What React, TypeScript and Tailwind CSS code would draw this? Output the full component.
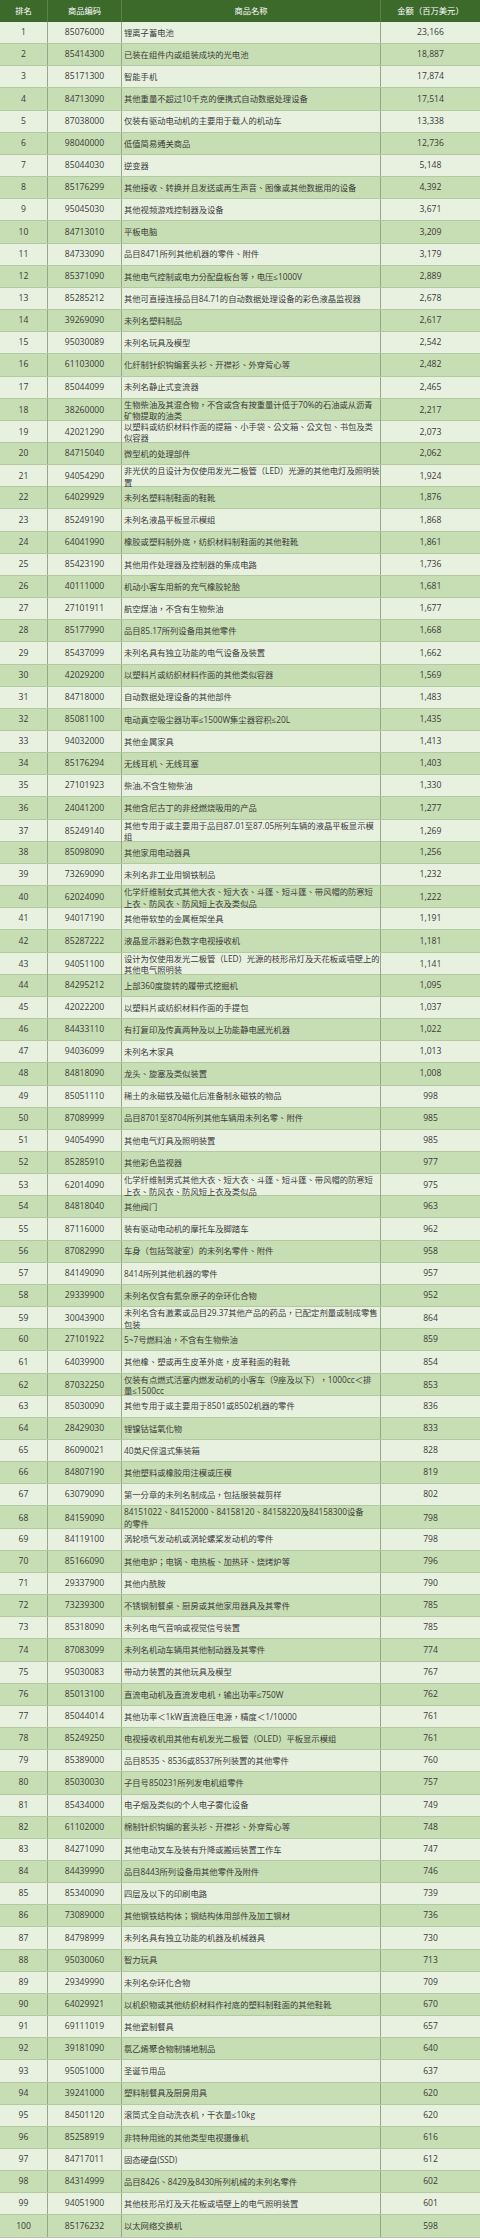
const rows: [string, string, string][] = [
  ["85076000", "锂离子蓄电池", "23,166"],
  ["85414300", "已装在组件内或组装成块的光电池", "18,887"],
  ["85171300", "智能手机", "17,874"],
  ["84713090", "其他重量不超过10千克的便携式自动数据处理设备", "17,514"],
  ["87038000", "仅装有驱动电动机的主要用于载人的机动车", "13,338"],
  ["98040000", "低值简易通关商品", "12,736"],
  ["85044030", "逆变器", "5,148"],
  ["85176299", "其他接收、转换并且发送或再生声音、图像或其他数据用的设备", "4,392"],
  ["95045030", "其他视频游戏控制器及设备", "3,671"],
  ["84713010", "平板电脑", "3,209"],
  ["84733090", "品目8471所列其他机器的零件、附件", "3,179"],
  ["85371090", "其他电气控制或电力分配盘板台等，电压≤1000V", "2,889"],
  ["85285212", "其他可直接连接品目84.71的自动数据处理设备的彩色液晶监视器", "2,678"],
  ["39269090", "未列名塑料制品", "2,617"],
  ["95030089", "未列名玩具及模型", "2,542"],
  ["61103000", "化纤制针织钩编套头衫、开襟衫、外穿背心等", "2,482"],
  ["85044099", "未列名静止式变流器", "2,465"],
  ["38260000", "生物柴油及其混合物，不含或含有按重量计低于70%的石油或从沥青\n矿物提取的油类", "2,217"],
  ["42021290", "以塑料或纺织材料作面的提箱、小手袋、公文箱、公文包、书包及类\n似容器", "2,073"],
  ["84715040", "微型机的处理部件", "2,062"],
  ["94054290", "非光伏的且设计为仅使用发光二极管（LED）光源的其他电灯及照明装\n置", "1,924"],
  ["64029929", "未列名塑料制鞋面的鞋靴", "1,876"],
  ["85249190", "未列名液晶平板显示模组", "1,868"],
  ["64041990", "橡胶或塑料制外底，纺织材料制鞋面的其他鞋靴", "1,861"],
  ["85423190", "其他用作处理器及控制器的集成电路", "1,736"],
  ["40111000", "机动小客车用新的充气橡胶轮胎", "1,681"],
  ["27101911", "航空煤油，不含有生物柴油", "1,677"],
  ["85177990", "品目85.17所列设备用其他零件", "1,668"],
  ["85437099", "未列名具有独立功能的电气设备及装置", "1,662"],
  ["42029200", "以塑料片或纺织材料作面的其他类似容器", "1,569"],
  ["84718000", "自动数据处理设备的其他部件", "1,483"],
  ["85081100", "电动真空吸尘器功率≤1500W集尘器容积≤20L", "1,435"],
  ["94032000", "其他金属家具", "1,413"],
  ["85176294", "无线耳机、无线耳塞", "1,403"],
  ["27101923", "柴油,不含生物柴油", "1,330"],
  ["24041200", "其他含尼古丁的非经燃烧吸用的产品", "1,277"],
  ["85249140", "其他专用于或主要用于品目87.01至87.05所列车辆的液晶平板显示模\n组", "1,269"],
  ["85098090", "其他家用电动器具", "1,256"],
  ["73269090", "未列名非工业用钢铁制品", "1,232"],
  ["62024090", "化学纤维制女式其他大衣、短大衣、斗篷、短斗篷、带风帽的防寒短\n上衣、防风衣、防风短上衣及类似品", "1,222"],
  ["94017190", "其他带软垫的金属框架坐具", "1,191"],
  ["85287222", "液晶显示器彩色数字电视接收机", "1,181"],
  ["94051100", "设计为仅使用发光二极管（LED）光源的枝形吊灯及天花板或墙壁上的\n其他电气照明装", "1,141"],
  ["84295212", "上部360度旋转的履带式挖掘机", "1,095"],
  ["42022200", "以塑料片或纺织材料作面的手提包", "1,037"],
  ["84433110", "有打复印及传真两种及以上功能静电感光机器", "1,022"],
  ["94036099", "未列名木家具", "1,013"],
  ["84818090", "龙头、旋塞及类似装置", "1,008"],
  ["85051110", "稀土的永磁铁及磁化后准备制永磁铁的物品", "998"],
  ["87089999", "品目8701至8704所列其他车辆用未列名零、附件", "985"],
  ["94054990", "其他电气灯具及照明装置", "985"],
  ["85285910", "其他彩色监视器", "977"],
  ["62014090", "化学纤维制男式其他大衣、短大衣、斗篷、短斗篷、带风帽的防寒短\n上衣、防风衣、防风短上衣及类似品", "975"],
  ["84818040", "其他阀门", "963"],
  ["87116000", "装有驱动电动机的摩托车及脚踏车", "962"],
  ["87082990", "车身（包括驾驶室）的未列名零件、附件", "958"],
  ["84149090", "8414所列其他机器的零件", "957"],
  ["29339900", "未列名仅含有氮杂原子的杂环化合物", "952"],
  ["30043900", "未列名含有激素或品目29.37其他产品的药品，已配定剂量或制成零售\n包装", "864"],
  ["27101922", "5~7号燃料油，不含有生物柴油", "859"],
  ["64039900", "其他橡、塑或再生皮革外底，皮革鞋面的鞋靴", "854"],
  ["87032250", "仅装有点燃式活塞内燃发动机的小客车（9座及以下），1000cc＜排\n量≤1500cc", "853"],
  ["85030090", "其他专用于或主要用于8501或8502机器的零件", "836"],
  ["28429030", "锂镍钴锰氧化物", "833"],
  ["86090021", "40英尺保温式集装箱", "828"],
  ["84807190", "其他塑料或橡胶用注模或压模", "819"],
  ["63079090", "第一分章的未列名制成品，包括服装裁剪样", "802"],
  ["84159090", "84151022、84152000、84158120、84158220及84158300设备\n的零件", "798"],
  ["84119100", "涡轮喷气发动机或涡轮螺桨发动机的零件", "798"],
  ["85166090", "其他电炉；电锅、电热板、加热环、烧烤炉等", "796"],
  ["29337900", "其他内酰胺", "790"],
  ["73239300", "不锈钢制餐桌、厨房或其他家用器具及其零件", "785"],
  ["85318090", "未列名电气音响或视觉信号装置", "785"],
  ["87083099", "未列名机动车辆用其他制动器及其零件", "774"],
  ["95030083", "带动力装置的其他玩具及模型", "767"],
  ["85013100", "直流电动机及直流发电机，输出功率≤750W", "762"],
  ["85044014", "其他功率＜1kW直流稳压电源，精度＜1/10000", "761"],
  ["85249250", "电视接收机用其他有机发光二极管（OLED）平板显示模组", "761"],
  ["85389000", "品目8535、8536或8537所列装置的其他零件", "760"],
  ["85030030", "子目号850231所列发电机组零件", "757"],
  ["85434000", "电子烟及类似的个人电子雾化设备", "749"],
  ["61102000", "棉制针织钩编的套头衫、开襟衫、外穿背心等", "748"],
  ["84271090", "其他电动叉车及装有升降或搬运装置工作车", "747"],
  ["84439990", "品目8443所列设备用其他零件及附件", "746"],
  ["85340090", "四层及以下的印刷电路", "739"],
  ["73089000", "其他钢铁结构体；钢结构体用部件及加工钢材", "736"],
  ["84798999", "未列名具有独立功能的机器及机械器具", "730"],
  ["95030060", "智力玩具", "713"],
  ["29349990", "未列名杂环化合物", "709"],
  ["64029921", "以机织物或其他纺织材料作衬底的塑料制鞋面的其他鞋靴", "670"],
  ["69111019", "其他瓷制餐具", "657"],
  ["39181090", "氯乙烯聚合物制铺地制品", "640"],
  ["95051000", "圣诞节用品", "637"],
  ["39241000", "塑料制餐具及厨房用具", "620"],
  ["84501120", "滚筒式全自动洗衣机，干衣量≤10kg", "620"],
  ["85258919", "非特种用途的其他类型电视摄像机", "616"],
  ["84717011", "固态硬盘(SSD)", "612"],
  ["84314999", "品目8426、8429及8430所列机械的未列名零件", "602"],
  ["94051900", "其他枝形吊灯及天花板或墙壁上的电气照明装置", "601"],
  ["85176232", "以太网络交换机", "598"],
]

export default function App() {
  return (
    <div className="w-[480px] bg-white font-['Open_Sans','Noto_Sans_CJK_TC',sans-serif] text-[#3a3a3a]">
      <div className="grid h-[22px] grid-cols-[48px_74px_259px_99px] bg-[#3b6a2b] text-[8.3px] text-white">
        <div className="flex items-center justify-center border-r border-[#5a8249]">排名</div>
        <div className="flex items-center justify-center border-r border-[#5a8249]">商品编码</div>
        <div className="flex items-center justify-center border-r border-[#5a8249]">商品名称</div>
        <div className="flex items-center justify-center">金额（百万美元）</div>
      </div>
      {rows.map(([code, name, amount], i) => (
        <div
          key={code + i}
          className={
            "grid h-[22.16px] grid-cols-[48px_74px_259px_99px] border-b border-[#b3c9a1] " +
            (i % 2 === 0 ? "bg-[#e8f1e0]" : "bg-[#c7ddb3]")
          }
        >
          <div className="flex items-center justify-center border-r border-[#95a88a] text-[8.6px]">{i + 1}</div>
          <div className="flex items-center justify-center border-r border-[#95a88a] text-[8.6px]">{code}</div>
          <div className="flex items-center whitespace-pre-line border-r border-[#95a88a] pl-[2px] text-[8.3px] leading-[11.6px]">
            {name}
          </div>
          <div className="flex items-center justify-center text-[8.6px]">{amount}</div>
        </div>
      ))}
    </div>
  )
}
